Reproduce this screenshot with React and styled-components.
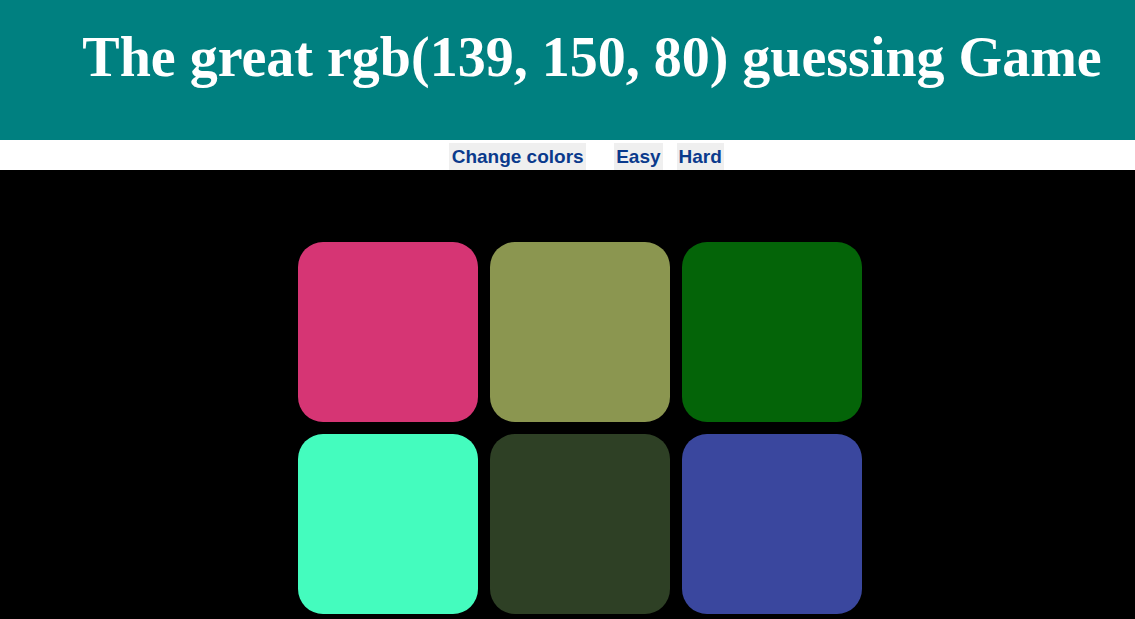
import styled, { createGlobalStyle } from 'styled-components';

const GlobalStyle = createGlobalStyle`
  html, body {
    margin: 0;
    padding: 0;
    background: #000000;
  }
`;

const colors = {
  header: '#008080',
  white: '#ffffff',
  buttonFace: '#efefef',
  buttonText: '#0a3a8c',
  board: '#000000',
};

const squares = [
  '#d63574',
  '#8b9650',
  '#046408',
  '#44fcbe',
  '#2e4025',
  '#3a479e',
];

const Header = styled.header`
  background: ${colors.header};
  height: 140px;
  box-sizing: border-box;
  padding: 26px 0 0 49px;
`;

const Title = styled.h1`
  margin: 0;
  text-align: center;
  color: ${colors.white};
  font-family: "Liberation Serif", "Times New Roman", serif;
  font-weight: 700;
  font-size: 56px;
  line-height: 62px;
  white-space: nowrap;
`;

const Toolbar = styled.nav`
  background: ${colors.white};
  height: 30px;
  box-sizing: border-box;
  padding: 3px 0 0 38px;
  display: flex;
  justify-content: center;
  align-items: flex-start;
`;

const ToolButton = styled.button`
  border: none;
  margin: 0 0 0 ${(p) => p.$gap || 0}px;
  padding: 3px ${(p) => p.$pad || 2}px;
  height: 27px;
  background: ${colors.buttonFace};
  color: ${colors.buttonText};
  font-family: "Liberation Sans", Arial, sans-serif;
  font-weight: 700;
  font-size: 19px;
  line-height: 22px;
  white-space: nowrap;
  cursor: pointer;
`;

const Board = styled.main`
  background: ${colors.board};
  padding: 72px 0 5px 25px;
  display: flex;
  justify-content: center;
`;

const Grid = styled.div`
  display: grid;
  grid-template-columns: repeat(3, 180px);
  gap: 12px;
`;

const Square = styled.div`
  width: 180px;
  height: 180px;
  border-radius: 25px;
  background: ${(p) => p.$color};
`;

export default function App() {
  return (
    <>
      <GlobalStyle />
      <Header>
        <Title>The great rgb(139, 150, 80) guessing Game</Title>
      </Header>

      <Toolbar>
        <ToolButton type="button" $pad={2.5}>Change colors</ToolButton>
        <ToolButton type="button" $gap={28}>Easy</ToolButton>
        <ToolButton type="button" $gap={14}>Hard</ToolButton>
      </Toolbar>

      <Board>
        <Grid>
          {squares.map((c, i) => (
            <Square key={i} $color={c} />
          ))}
        </Grid>
      </Board>
    </>
  );
}
